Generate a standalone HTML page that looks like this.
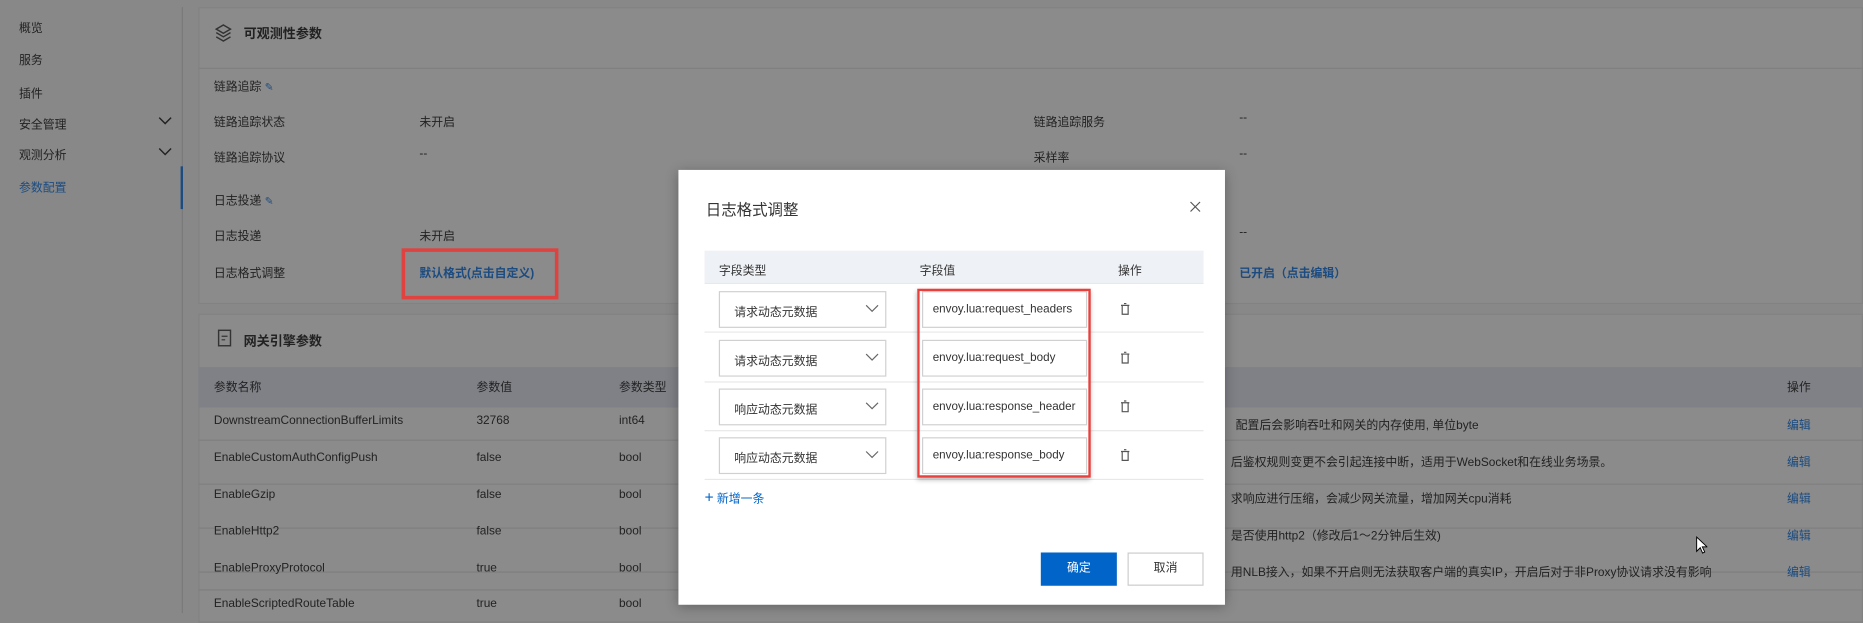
<!DOCTYPE html>
<html><head><meta charset="utf-8"><style>
*{box-sizing:border-box;margin:0;padding:0}
body{width:1863px;height:604px;overflow:hidden;background:#888;font-family:"Liberation Sans","Noto Sans CJK SC",sans-serif;color:#222}
#w{position:absolute;left:0;top:0;width:1568px;height:509px;transform:scale(1.18814);transform-origin:0 0;font-size:10px}
.a{position:absolute;white-space:nowrap}
.nav{left:16px;color:#222}
.card{position:absolute;left:167px;right:0;background:#8b8b8b;border:1px solid #828282}
.hl{position:absolute;left:167px;right:0;height:1px;background:#7f7f7f}
.blue{color:#1b4b80}
.m{position:absolute;left:571px;top:143px;width:460px;height:366px;background:#fff;box-shadow:0 2px 10px rgba(0,0,0,.3)}
.m .a{color:#333}
.sel{position:absolute;left:34px;width:141px;height:31px;border:1px solid #d0d0d0;background:#fff}
.inp{position:absolute;left:205px;width:139px;height:31px;border:1px solid #d0d0d0;background:#fff;font-size:9.8px;padding:9px 0 0 8px;color:#333;overflow:hidden}
.rl{position:absolute;left:22px;width:420px;height:1px;background:#e8e8e8}
</style></head><body><div id="w">
<div class="a" style="left:153px;top:6px;width:1px;height:510px;background:#7a7a7a"></div>
<div class="a" style="left:152px;top:140px;width:2px;height:36px;background:#1b4b80"></div>
<div class="a nav" style="top:15px">概览</div>
<div class="a nav" style="top:42px">服务</div>
<div class="a nav" style="top:70px">插件</div>
<div class="a nav" style="top:96px">安全管理</div>
<div class="a nav" style="top:122px">观测分析</div>
<div class="a nav blue" style="top:149px">参数配置</div>
<svg class="a" style="left:133px;top:97px" width="12" height="40"><path d="M1 2l5 5 5-5M1 28l5 5 5-5" fill="none" stroke="#222" stroke-width="1.2"/></svg>

<div class="card" style="top:6px;height:250px"></div>
<div class="hl" style="top:57px"></div>
<svg class="a" style="left:181px;top:20px" width="14" height="16"><path d="M7 1l6 3.5-6 3.5-6-3.5z M1 7.5l6 3.5 6-3.5 M1 11l6 3.5 6-3.5" fill="none" stroke="#333" stroke-width="1.2"/></svg>
<div class="a" style="left:205px;top:20px;font-size:11px;font-weight:bold;color:#222">可观测性参数</div>
<div class="a" style="left:180px;top:64px">链路追踪 <span class="blue" style="font-size:9px">&#9998;</span></div>
<div class="a" style="left:180px;top:94px">链路追踪状态</div><div class="a" style="left:353px;top:94px">未开启</div>
<div class="a" style="left:180px;top:124px">链路追踪协议</div><div class="a" style="left:353px;top:124px">--</div>
<div class="a" style="left:870px;top:94px">链路追踪服务</div><div class="a" style="left:1043px;top:94px">--</div>
<div class="a" style="left:870px;top:124px">采样率</div><div class="a" style="left:1043px;top:124px">--</div>
<div class="a" style="left:180px;top:160px">日志投递 <span class="blue" style="font-size:9px">&#9998;</span></div>
<div class="a" style="left:180px;top:190px">日志投递</div><div class="a" style="left:353px;top:190px">未开启</div>
<div class="a" style="left:1043px;top:190px">--</div>
<div class="a" style="left:180px;top:221px">日志格式调整</div>
<div class="a blue" style="left:353px;top:221px;font-weight:bold">默认格式(点击自定义)</div>
<div class="a" style="left:338px;top:209px;width:132px;height:43px;border:3px solid #e0423f"></div>
<div class="a blue" style="left:1043px;top:221px;font-weight:bold">已开启（点击编辑）</div>

<div class="card" style="top:264px;height:260px"></div>
<svg class="a" style="left:183px;top:277px" width="12" height="15"><rect x="1" y="1" width="10" height="13" fill="none" stroke="#333" stroke-width="1.2"/><path d="M3.5 6h5M3.5 9h3" stroke="#333"/></svg>
<div class="a" style="left:205px;top:279px;font-size:11px;font-weight:bold;color:#222">网关引擎参数</div>
<div class="a" style="left:167px;top:309px;right:0;height:34px;background:#7f8187"></div>
<div class="a" style="left:180px;top:317px">参数名称</div><div class="a" style="left:401px;top:317px">参数值</div><div class="a" style="left:521px;top:317px">参数类型</div><div class="a" style="left:1504px;top:317px">操作</div>
<div class="hl" style="top:370px"></div><div class="hl" style="top:407px"></div><div class="hl" style="top:444px"></div><div class="hl" style="top:481px"></div><div class="hl" style="top:496px"></div>
<div class="a" style="left:180px;top:349px">DownstreamConnectionBufferLimits</div><div class="a" style="left:401px;top:349px">32768</div><div class="a" style="left:521px;top:349px">int64</div>
<div class="a" style="left:180px;top:380px">EnableCustomAuthConfigPush</div><div class="a" style="left:401px;top:380px">false</div><div class="a" style="left:521px;top:380px">bool</div>
<div class="a" style="left:180px;top:411px">EnableGzip</div><div class="a" style="left:401px;top:411px">false</div><div class="a" style="left:521px;top:411px">bool</div>
<div class="a" style="left:180px;top:442px">EnableHttp2</div><div class="a" style="left:401px;top:442px">false</div><div class="a" style="left:521px;top:442px">bool</div>
<div class="a" style="left:180px;top:473px">EnableProxyProtocol</div><div class="a" style="left:401px;top:473px">true</div><div class="a" style="left:521px;top:473px">bool</div>
<div class="a" style="left:180px;top:503px">EnableScriptedRouteTable</div><div class="a" style="left:401px;top:503px">true</div><div class="a" style="left:521px;top:503px">bool</div>
<div class="a" style="left:1040px;top:349px">配置后会影响吞吐和网关的内存使用, 单位byte</div>
<div class="a" style="left:1036px;top:380px">后鉴权规则变更不会引起连接中断，适用于WebSocket和在线业务场景。</div>
<div class="a" style="left:1036px;top:411px">求响应进行压缩，会减少网关流量，增加网关cpu消耗</div>
<div class="a" style="left:1036px;top:442px">是否使用http2（修改后1～2分钟后生效)</div>
<div class="a" style="left:1036px;top:473px">用NLB接入，如果不开启则无法获取客户端的真实IP，开启后对于非Proxy协议请求没有影响</div>
<div class="a blue" style="left:1504px;top:349px">编辑</div><div class="a blue" style="left:1504px;top:380px">编辑</div><div class="a blue" style="left:1504px;top:411px">编辑</div><div class="a blue" style="left:1504px;top:442px">编辑</div><div class="a blue" style="left:1504px;top:473px">编辑</div>

<div class="m">
<div class="a" style="left:23px;top:23px;font-size:13px;color:#333">日志格式调整</div>
<svg class="a" style="left:430px;top:26px" width="10" height="10"><path d="M1 1l8 8M9 1L1 9" stroke="#555" stroke-width="1"/></svg>
<div class="a" style="left:22px;top:68px;width:420px;height:27px;background:#eef1f5"></div>
<div class="a" style="left:34px;top:76px">字段类型</div><div class="a" style="left:203px;top:76px">字段值</div><div class="a" style="left:370px;top:76px">操作</div>
<div class="rl" style="top:95px"></div><div class="rl" style="top:136px"></div><div class="rl" style="top:178px"></div><div class="rl" style="top:219px"></div><div class="rl" style="top:260px"></div>
<div class="sel" style="top:102px"></div><div class="sel" style="top:143px"></div><div class="sel" style="top:184px"></div><div class="sel" style="top:225px"></div>
<div class="a" style="left:47px;top:111px">请求动态元数据</div><div class="a" style="left:47px;top:152px">请求动态元数据</div><div class="a" style="left:47px;top:193px">响应动态元数据</div><div class="a" style="left:47px;top:234px">响应动态元数据</div>
<svg class="a" style="left:157px;top:112px" width="12" height="140"><path d="M1 2l5 5 5-5M1 43l5 5 5-5M1 84l5 5 5-5M1 125l5 5 5-5" fill="none" stroke="#666" stroke-width="1"/></svg>
<div class="inp" style="top:102px">envoy.lua:request_headers</div>
<div class="inp" style="top:143px">envoy.lua:request_body</div>
<div class="inp" style="top:184px">envoy.lua:response_header</div>
<div class="inp" style="top:225px">envoy.lua:response_body</div>
<div class="a" style="left:201px;top:100px;width:146px;height:159px;border:2.5px solid #e8403d;box-shadow:0 2px 4px rgba(0,0,0,.3)"></div>
<svg class="a" style="left:372px;top:112px" width="8" height="140"><g fill="none" stroke="#555"><path d="M0.5 2h7M3 0.5h2M1.5 2.5v7h5v-7"/><path d="M0.5 43h7M3 41.5h2M1.5 43.5v7h5v-7"/><path d="M0.5 84h7M3 82.5h2M1.5 84.5v7h5v-7"/><path d="M0.5 125h7M3 123.5h2M1.5 125.5v7h5v-7"/></g></svg>
<div class="a" style="left:22px;top:268px;color:#0064c8"><span style="font-size:13px">+</span> 新增一条</div>
<div class="a" style="left:305px;top:322px;width:64px;height:28px;background:#0064c8;color:#fff;text-align:center;line-height:28px">确定</div>
<div class="a" style="left:378px;top:322px;width:64px;height:28px;border:1px solid #ccc;color:#333;text-align:center;line-height:26px">取消</div>
</div>
<svg class="a" style="left:1427px;top:451px" width="10" height="16"><path d="M1 1v12l3-3 2 4.5 1.8-.9-2-4.3h4z" fill="#fff" stroke="#000" stroke-width=".8"/></svg>
</div></body></html>
